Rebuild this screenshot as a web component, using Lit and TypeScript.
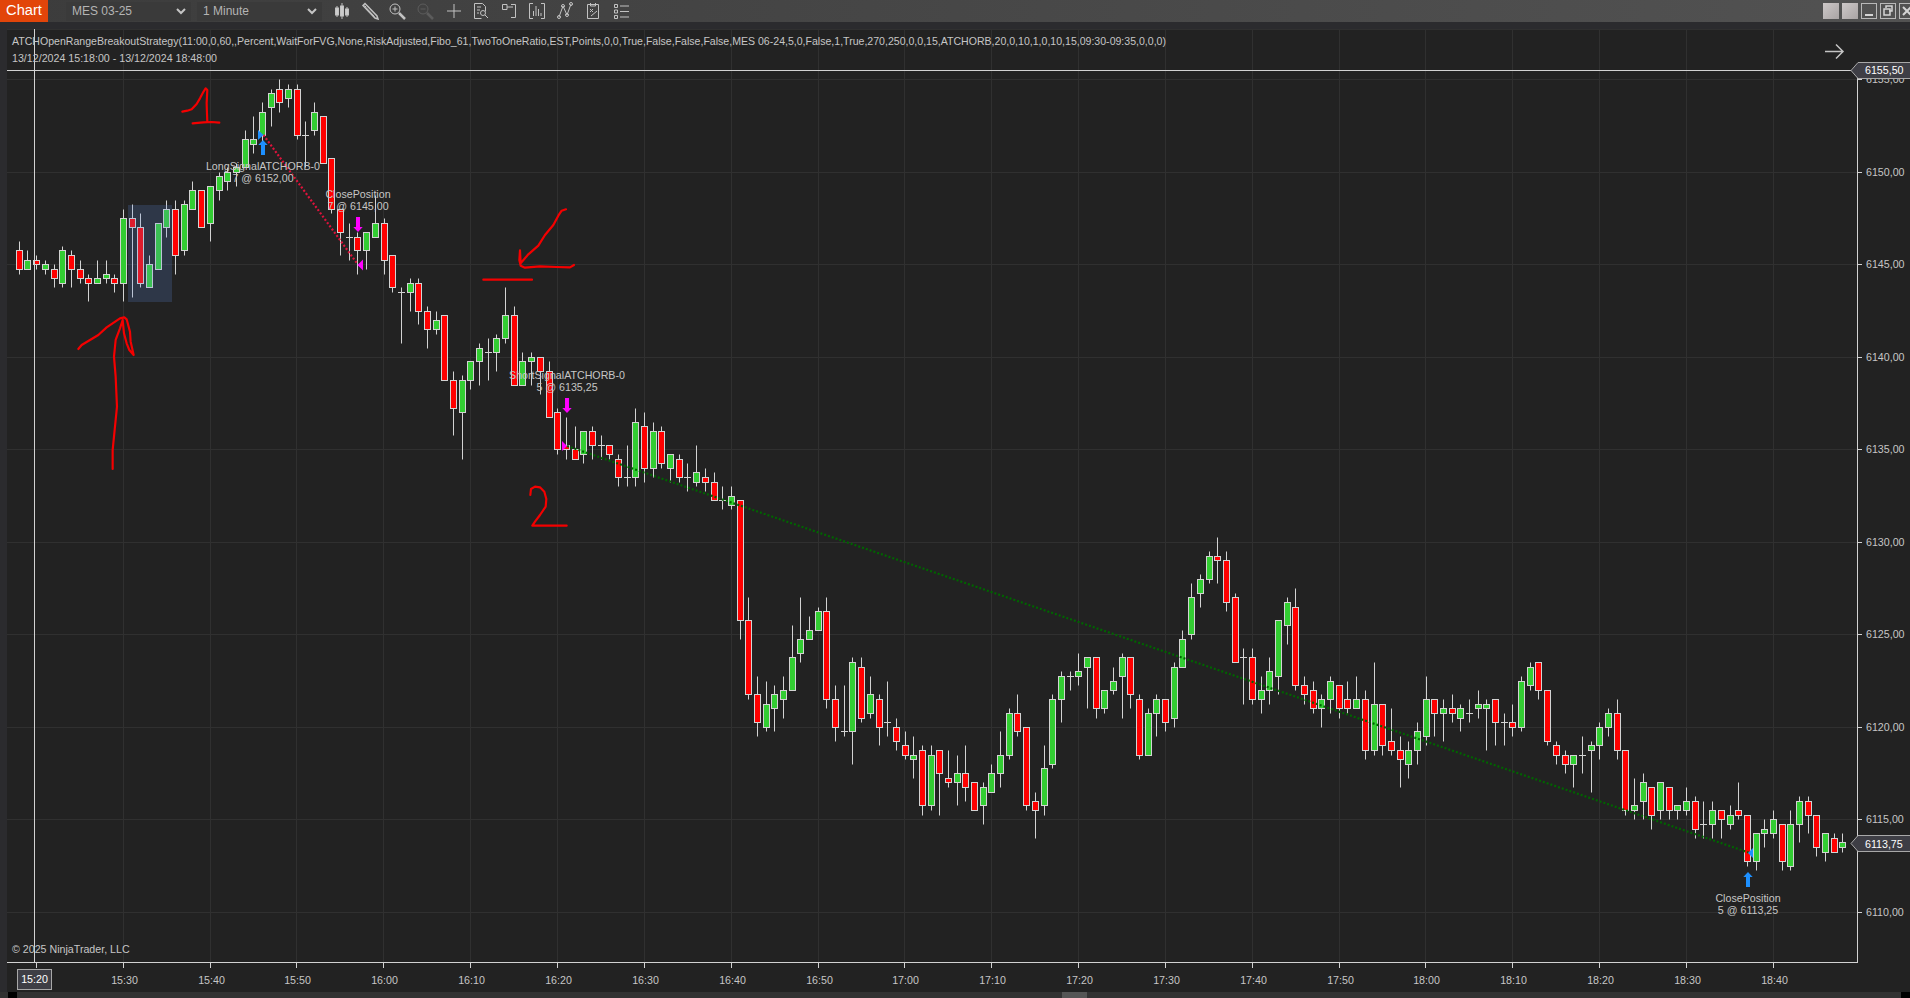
import { LitElement, html, css, svg } from "lit";
import { customElement } from "lit/decorators.js";

type Row = number[];
// Candles read as [wickTop, bodyTop, bodyBottom, wickBottom, kind]; kind 0 red, 1 green, 2 doji.
const sections: [number, Row[]][] = [
  [70, [
    [516,541,598,612,0],[543,568,598,600,1],[558,568,583,600,0],[570,583,598,612,1],[583,598,625,654,0],
    [527,541,640,654,1],[543,556,598,654,0],[570,598,625,640,0],[612,625,640,695,0],[570,625,640,640,1],
    [570,610,625,640,1],[612,625,640,668,0],[418,445,640,695,1],[405,445,472,680,0],[432,472,640,654,0],
    [558,583,652,654,1],[458,458,598,600,1],[390,415,472,500,1],[390,415,556,612,0],[390,403,541,556,1],
    [336,362,415,415,1],[362,362,472,472,0],[346,346,457,515,1],[305,320,360,390,1],[290,305,334,362,1],
    [280,292,304,347,1],[183,208,290,290,1],[141,208,223,250,1],[100,124,193,222,1],[55,70,112,168,1],
    [30,55,97,125,0],[42,55,82,112,1],[42,55,193,208,0],[152,193,193,290,2],[100,124,181,193,1],
    [138,138,278,278,0],[265,265,415,430,0],[415,418,487,556,0],[460,498,498,570,2],[485,499,541,612,0],
    [487,487,541,600,1],[375,458,499,499,1],[448,458,568,612,0],[556,556,652,665,0],
  ]],
  [260, [
    [85,97,97,252,2],[57,70,97,152,1],[57,70,152,195,0],[140,152,208,264,0],[152,181,208,222,1],
    [167,167,362,362,0],[333,362,445,527,0],[348,362,458,597,1],[305,305,362,390,1],[252,263,305,375,1],
    [237,277,277,362,2],[220,236,277,333,1],[85,167,236,252,1],[140,167,373,375,0],[280,305,373,375,1],
    [280,292,305,375,1],[292,292,332,403,0],[305,332,472,472,0],[445,458,568,585,0],[475,556,568,597,0],
    [502,568,596,597,0],[515,515,583,612,1],[502,515,556,597,0],[528,556,556,597,2],[556,556,583,597,0],
    [587,596,652,680,0],[558,652,652,680,2],[447,485,652,680,1],[460,500,625,668,0],[487,515,625,652,1],
    [502,515,610,625,0],[585,583,625,668,1],[587,596,652,668,0],[612,652,652,695,2],[558,638,667,680,1],
    [628,652,667,695,0],[640,668,722,722,0],
  ]],
  [480, [
    [20,60,60,90,2],[20,46,76,90,1],[62,62,421,480,0],[355,421,646,658,0],[592,646,727,770,0],
    [607,673,743,758,1],[618,646,685,758,1],[592,631,658,716,1],[438,535,631,631,1],[355,478,520,548,1],
    [411,451,478,478,1],[385,394,451,451,1],[355,394,658,686,0],[618,658,742,785,0],[618,757,757,770,2],
    [537,548,757,855,1],[537,562,715,728,0],[592,646,700,716,1],[648,658,742,797,0],[607,727,727,770,2],
    [717,742,784,812,0],[758,797,826,840,0],[771,826,838,896,1],[797,811,979,1007,0],[798,826,979,992,1],
    [811,811,880,1007,0],[813,895,910,923,0],[828,880,910,980,1],[798,880,922,965,0],[910,910,991,991,0],
    [912,922,979,1035,1],[855,880,937,938,1],[758,826,880,923,1],[687,700,826,840,1],[648,700,757,770,0],
    [742,742,979,992,0],[938,964,991,1077,0],[797,868,979,1007,1],[648,658,853,868,1],[576,590,658,728,1],
    [576,590,590,632,2],[522,574,590,618,1],[535,535,562,686,1],[535,535,685,716,0],
  ]],
  [520, [
    [510,511,565,580,1],[445,484,511,527,1],[403,415,470,597,1],[415,415,526,566,0],[528,538,706,720,0],
    [568,580,706,706,1],[528,538,580,650,1],[538,538,607,638,0],[430,442,595,623,1],[333,358,442,442,1],
    [192,232,343,360,1],[165,178,220,263,1],[96,109,178,192,1],[55,109,121,192,0],[96,121,247,276,0],
    [222,232,427,427,0],[388,415,415,555,2],[388,415,538,555,0],[472,511,538,582,1],[418,454,511,555,1],
    [300,301,469,528,1],[235,247,316,375,1],[207,262,496,513,0],[472,496,526,555,0],[487,511,565,582,0],
    [528,538,565,623,1],[472,484,538,582,1],[496,496,565,597,0],[487,538,565,582,0],[472,538,565,565,1],
    [514,538,691,720,0],[430,553,691,707,1],[553,553,676,707,0],[568,664,691,707,0],[652,691,718,803,0],
    [667,691,733,777,1],[610,637,691,735,1],[472,538,650,678,1],[538,538,580,650,0],[541,565,580,665,1],
    [528,565,580,608,0],[555,565,595,638,1],[541,580,580,608,2],[514,553,565,597,1],[541,553,565,692,1],
    [538,538,607,678,0],
  ]],
  [680, [
    [102,127,127,197,2],[75,127,142,170,0],[-8,3,142,158,1],[-50,-38,16,32,1],[-53,-53,32,60,0],
    [31,31,184,197,0],[187,197,226,255,0],[213,226,253,282,0],[226,226,253,323,1],[170,226,226,282,2],
    [187,197,211,338,1],[129,142,197,240,1],[87,100,142,170,1],[60,100,211,240,0],[211,211,391,407,0],
    [297,379,391,423,1],[281,310,365,423,1],[322,322,407,450,0],[310,310,391,423,1],[322,322,391,423,0],
    [379,379,391,423,1],[324,364,391,407,1],[351,364,449,477,0],[366,433,433,477,2],[366,391,433,477,1],
    [391,391,421,477,0],[381,406,433,449,1],[312,391,406,423,0],[406,406,545,560,0],[460,460,545,572,1],
    [423,448,460,503,1],[393,421,460,476,1],[433,433,545,572,0],[393,433,559,572,1],[352,364,433,491,1],
    [352,364,406,461,0],[406,406,503,533,0],[460,460,517,545,1],[463,475,517,517,0],[462,490,503,518,1],
  ]],
];

const tick = (y: number) => Math.round((y - 79.8) / 4.625);
const Y = (n: number) => Math.floor(79.8 + n * 4.625) + 0.5;
const X = (i: number) => Math.floor(19.3 + 8.684 * i) + 0.5;

const candles: { w0: number; w1: number; b0: number; b1: number; kind: number }[] = [];
for (const [y0, rows] of sections) {
  for (const [wt, bt, bb, wb, kind] of rows) {
    const f = (z: number) => Y(tick(y0 + z / 3));
    candles.push({ w0: f(wt), b0: f(bt), b1: f(bb), w1: f(wb), kind });
  }
}

const priceY = (p: number) => Math.floor(357.3 + (6140 - p) * 18.5) + 0.5;
const prices = [6155, 6150, 6145, 6140, 6135, 6130, 6125, 6120, 6115, 6110];
const times: string[] = [];
for (let m = 15 * 60 + 30; m <= 18 * 60 + 40; m += 10) {
  times.push(`${Math.floor(m / 60)}:${String(m % 60).padStart(2, "0")}`);
}
const timeX = (k: number) => Math.floor(123.3 + 86.84 * k) + 0.5;

const ink: [number, number, string][] = [
  [0, 70, "547,125 562,122 575,118 590,102 600,85 610,66 617,55 622,60 621,80 620,100 621,130 622,155"],
  [0, 70, "578,160 610,157 635,156 658,158"],
  [0, 300, "338,507 338,450 345,380 351,320 347,230 342,170 347,120 360,85 368,60 372,100 380,130 388,150 401,165 392,125 390,95 380,58 373,52 360,55 320,82 295,105 245,135 235,147"],
  [470, 195, "288,43 275,47 265,62 250,90 225,120 205,152 175,178 152,205 150,166 148,195 152,212 165,218 210,214 260,216 300,217 312,210"],
  [470, 195, "40,254 186,254"],
  [525, 475, "16,60 18,42 30,35 45,37 58,50 64,72 62,95 45,120 30,140 22,152 60,152 125,152"],
];

const HEADER =
  "ATCHOpenRangeBreakoutStrategy(11:00,0,60,,Percent,WaitForFVG,None,RiskAdjusted,Fibo_61,TwoToOneRatio,EST,Points,0,0,True,False,False,False,MES 06-24,5,0,False,1,True,270,250,0,0,15,ATCHORB,20,0,10,1,0,10,15,09:30-09:35,0,0,0)";

const upArrow = (cx: number, top: number) =>
  `${cx},${top} ${cx + 4.7},${top + 5} ${cx + 2},${top + 5} ${cx + 2},${top + 15} ${cx - 2},${top + 15} ${cx - 2},${top + 5} ${cx - 4.7},${top + 5}`;
const downArrow = (cx: number, top: number) =>
  `${cx},${top + 15} ${cx + 4.7},${top + 10} ${cx + 2},${top + 10} ${cx + 2},${top} ${cx - 2},${top} ${cx - 2},${top + 10} ${cx - 4.7},${top + 10}`;

@customElement("app-root")
export class AppRoot extends LitElement {
  static styles = css`
    :host {
      display: block;
      width: 1910px;
      height: 998px;
      overflow: hidden;
      background: #2b2b2e;
      font-family: "Liberation Sans", Arial, sans-serif;
    }
    .toolbar {
      height: 22px;
      display: flex;
      align-items: center;
      background: linear-gradient(90deg, #3c3c3c, #525252);
    }
    .tab {
      width: 48px;
      height: 22px;
      line-height: 21px;
      text-align: center;
      background: #e2450a;
      color: #fff;
      font-size: 14.67px;
      margin-right: 18px;
    }
    .combo {
      width: 125px;
      height: 19px;
      margin-right: 6px;
      padding: 0 5px 0 6px;
      box-sizing: border-box;
      display: flex;
      align-items: center;
      justify-content: space-between;
      background: #3a3a3a;
      color: #b4b4b4;
      font-size: 12px;
    }
    .combo svg {
      width: 10px;
      height: 7px;
      fill: none;
      stroke: #c4c4c4;
      stroke-width: 2;
    }
    .icons {
      display: flex;
      gap: 7.9px;
      margin-left: 4px;
    }
    .icons svg {
      width: 20px;
      height: 18px;
      fill: none;
      stroke: #c2c2c2;
      stroke-width: 1;
    }
    .icons svg.dim {
      stroke: #5c5c5c;
    }
    .icons svg .solid {
      fill: #cccccc;
    }
    .windows {
      margin-left: auto;
      display: flex;
      gap: 3px;
      height: 16px;
    }
    .win {
      width: 16px;
      height: 16px;
      box-sizing: border-box;
      overflow: hidden;
    }
    .win.plain {
      background: linear-gradient(135deg, #cdc8c8, #a9a4a4);
    }
    .win.line {
      border: 1px solid #b8b8b8;
    }
    .win.cut {
      width: 11px;
      border-right: 0;
    }
    .win svg {
      display: block;
      width: 14px;
      height: 14px;
      fill: none;
      stroke: #d4d4d4;
      stroke-width: 2;
    }
    .gap {
      height: 7px;
      background: #2b2b2e;
    }
    .main {
      display: flex;
      height: 963px;
    }
    .rail {
      width: 7px;
      background: #2b2b2e;
    }
    .plot {
      display: block;
      width: 1903px;
      height: 963px;
      background: #222222;
    }
    .plot text {
      font-family: "Liberation Sans", Arial, sans-serif;
      font-size: 10.67px;
      fill: #c6c6c6;
    }
    .plot text.mid {
      text-anchor: middle;
    }
    .plot text.bright {
      fill: #ffffff;
    }
    .grid {
      stroke: #303030;
      stroke-width: 1;
    }
    .edge {
      stroke: #d2d2d2;
      stroke-width: 1;
    }
    .wick {
      stroke: #d3d3d3;
      stroke-width: 1;
    }
    .body {
      stroke: #d3d3d3;
      stroke-width: 1;
    }
    .up {
      fill: #32cd32;
    }
    .down {
      fill: #ff0000;
    }
    .zone {
      fill: rgba(94, 139, 224, 0.2);
    }
    .ink {
      fill: none;
      stroke: #f40000;
      stroke-width: 6.5;
      stroke-linejoin: round;
      stroke-linecap: round;
    }
    .exit-loss {
      stroke: #dc143c;
      stroke-width: 2.2;
      stroke-dasharray: 2 2;
    }
    .exit-win {
      stroke: #006400;
      stroke-width: 2.2;
      stroke-dasharray: 2 2;
    }
    .blue {
      fill: #1e90ff;
    }
    .magenta {
      fill: #ff00ff;
    }
    .tag {
      fill: #3e3e45;
      stroke: #a8a8a8;
      stroke-width: 1;
    }
    .nav {
      fill: none;
      stroke: #c4c4c4;
      stroke-width: 1.5;
    }
    .scroll {
      height: 6px;
      display: flex;
      background: #323232;
    }
    .nub {
      width: 9px;
      background: #000;
    }
    .nub.first {
      margin-left: 8px;
    }
    .thumb {
      width: 25px;
      margin-left: 1045px;
      background: #555;
    }
    .nub.last {
      margin-left: auto;
    }
  `;

  private marker(y: number, label: string, base: number) {
    return svg`<polygon class="tag" points="1851,${y} 1858,${y - 8} 1911,${y - 8} 1911,${y + 8} 1858,${y + 8}"></polygon>
      <text class="bright" x="1865" y=${base}>${label}</text>`;
  }

  render() {
    return html`
      <div class="toolbar">
        <div class="tab">Chart</div>
        <div class="combo">MES 03-25 <svg viewBox="0 0 10 7"><path d="M1 1l4 4 4-4"></path></svg></div>
        <div class="combo">1 Minute <svg viewBox="0 0 10 7"><path d="M1 1l4 4 4-4"></path></svg></div>
        <div class="icons">
          <svg viewBox="0 0 20 18"><path d="M5 4v11M10 1v16M15 5v10"></path><rect class="solid" x="3.500" y="6" width="3" height="7"></rect><rect class="solid" x="8.500" y="4" width="3" height="10"></rect><rect class="solid" x="13.500" y="7" width="3" height="6"></rect></svg>
          <svg viewBox="0 0 20 18"><path d="M3 3.500L5 1.500 17 14l1 3-3-1z" stroke-width="1.500"></path><path d="M6.500 6l8 8.500M4.500 3.500L6.500 5.500"></path></svg>
          <svg viewBox="0 0 20 18"><circle cx="7" cy="7" r="5"></circle><path d="M4.500 7h5M7 4.500v5"></path><path d="M11 11l6 6" stroke-width="2.500"></path></svg>
          <svg class="dim" viewBox="0 0 20 18"><circle cx="7" cy="7" r="5"></circle><path d="M4.500 7h5"></path><path d="M11 11l6 6" stroke-width="2.500"></path></svg>
          <svg viewBox="0 0 20 18"><path d="M10 2v14M3 9h14"></path></svg>
          <svg viewBox="0 0 20 18"><path d="M3.500 1.500h8l3 3v5M3.500 1.500v15h7"></path><path d="M6 5h4M6 8h3M6 11h2"></path><circle cx="12" cy="11" r="2.500"></circle><path d="M14 13l3 3"></path></svg>
          <svg viewBox="0 0 20 18"><path d="M3.500 2.500H8v5H3.500zM12 2.500h4.500v13H12"></path><path d="M8 5h6"></path></svg>
          <svg viewBox="0 0 20 18"><path d="M6 1.500H2.500v15H6M14 1.500h3.500v15H14"></path><path d="M6.500 14V9M9 14V4M11.500 14V7M14 14v-3"></path></svg>
          <svg viewBox="0 0 20 18"><path d="M4 15L8 4l4 9 4-11"></path><circle cx="4" cy="15" r="1.500"></circle><circle cx="8" cy="4" r="1.500"></circle><circle cx="12" cy="13" r="1.500"></circle><circle cx="16" cy="2" r="1.500"></circle></svg>
          <svg viewBox="0 0 20 18"><path d="M4.500 2.500h11v14h-11z"></path><path d="M7.500 1v3h5V1"></path><path d="M7 7l3 3M10 7l-3 3M8 14l6-5"></path></svg>
          <svg viewBox="0 0 20 18"><path d="M3.500 2.500h3v3h-3zM3.500 8h3v3h-3zM3.500 13.500h3v3h-3zM9 4h9M9 9.500h9M9 15h9"></path></svg>
        </div>
        <div class="windows">
          <div class="win plain"></div>
          <div class="win plain"></div>
          <div class="win line"><svg viewBox="0 0 14 14"><path d="M3 11h8"></path></svg></div>
          <div class="win line"><svg viewBox="0 0 14 14"><path d="M5 4V2h6v5H8M3 5h6v6H3z" stroke-width="1.500"></path></svg></div>
          <div class="win line cut"><svg viewBox="0 0 14 14"><path d="M3 3l8 8M11 3l-8 8"></path></svg></div>
        </div>
      </div>
      <div class="gap"></div>
      <div class="main">
        <div class="rail"></div>
        <svg class="plot" viewBox="7 29 1903 963">
          <line class="grid" x1="7" x2="1910" y1="29.500" y2="29.500"></line>
          ${prices.map((p) => svg`<line class="grid" x1="7" x2="1857" y1=${priceY(p)} y2=${priceY(p)}></line>`)}
          ${times.map((_, k) => svg`<line class="grid" x1=${timeX(k)} x2=${timeX(k)} y1="30" y2="962"></line>`)}
          <line class="edge" x1="1857.500" x2="1857.500" y1="70" y2="963"></line>
          <line class="edge" x1="7" x2="1858" y1="962.500" y2="962.500"></line>
          ${prices.map((p) => svg`<line class="edge" x1="1857" x2="1862" y1=${priceY(p)} y2=${priceY(p)}></line>
            <text x="1866" y=${priceY(p) + 3.5}>${p},00</text>`)}
          ${times.map((t, k) => svg`<line class="edge" x1=${timeX(k)} x2=${timeX(k)} y1="962" y2="968"></line>
            <text class="mid" x=${timeX(k) + 1} y="984">${t}</text>`)}
          <line class="edge" x1="36.500" x2="36.500" y1="962" y2="968"></line>

          ${candles.map((c, i) => {
            const x = X(i);
            if (c.kind === 2) {
              return svg`<line class="wick" x1=${x} x2=${x} y1=${c.w0} y2=${c.w1}></line>
                <line class="wick" x1=${x - 3.5} x2=${x + 3.5} y1=${c.b0} y2=${c.b0}></line>`;
            }
            return svg`<line class="wick" x1=${x} x2=${x} y1=${c.w0} y2=${c.w1}></line>
              <rect class="body ${c.kind === 1 ? "up" : "down"}" x=${x - 3} y=${c.b0} width="6" height=${Math.max(c.b1 - c.b0, 1)}></rect>`;
          })}

          <rect class="zone" x="128" y="205" width="44" height="97"></rect>

          ${ink.map(([x0, y0, pts]) => svg`<polyline class="ink" transform="translate(${x0} ${y0}) scale(0.3333)" points=${pts}></polyline>`)}

          <line class="exit-loss" x1="263.500" y1="135" x2="357.500" y2="264"></line>
          <line class="exit-win" x1="567" y1="446" x2="1748.500" y2="852.500"></line>

          <polygon class="blue" points="258,130 263.500,135 258,140"></polygon>
          <polygon class="blue" points=${upArrow(263, 140)}></polygon>
          <polygon class="magenta" points=${downArrow(358, 217)}></polygon>
          <polygon class="magenta" points="363,259.500 357.500,265 363,270.500"></polygon>
          <polygon class="magenta" points=${downArrow(567, 398)}></polygon>
          <polygon class="magenta" points="562,441 567,446 562,451"></polygon>
          <polygon class="blue" points=${upArrow(1748, 872)}></polygon>
          <polygon class="blue" points="1753,848 1748,853 1753,858"></polygon>

          <text class="mid" x="263" y="170">LongSignalATCHORB-0</text>
          <text class="mid" x="263" y="182">7 @ 6152,00</text>
          <text class="mid" x="358" y="198">ClosePosition</text>
          <text class="mid" x="358" y="210">7 @ 6145,00</text>
          <text class="mid" x="567" y="379">ShortSignalATCHORB-0</text>
          <text class="mid" x="567" y="391">5 @ 6135,25</text>
          <text class="mid" x="1748" y="902">ClosePosition</text>
          <text class="mid" x="1748" y="914">5 @ 6113,25</text>

          <line class="edge" x1="7" x2="1858" y1="70.500" y2="70.500"></line>
          <line class="edge" x1="34.500" x2="34.500" y1="29" y2="962"></line>

          <text x="12" y="45" textLength="1154" lengthAdjust="spacingAndGlyphs">${HEADER}</text>
          <text x="12" y="62">13/12/2024 15:18:00 - 13/12/2024 18:48:00</text>
          <text x="12" y="953">© 2025 NinjaTrader, LLC</text>

          <path class="nav" d="M1825 51.500h18M1836 44.500l7 7-7 7"></path>
          ${this.marker(70.5, "6155,50", 74)}
          ${this.marker(843.5, "6113,75", 847.5)}
          <rect class="tag" x="17.500" y="969.500" width="34" height="20"></rect>
          <text class="mid bright" x="34.500" y="983">15:20</text>
        </svg>
      </div>
      <div class="scroll">
        <div class="nub first"></div>
        <div class="thumb"></div>
        <div class="nub last"></div>
      </div>
    `;
  }
}
